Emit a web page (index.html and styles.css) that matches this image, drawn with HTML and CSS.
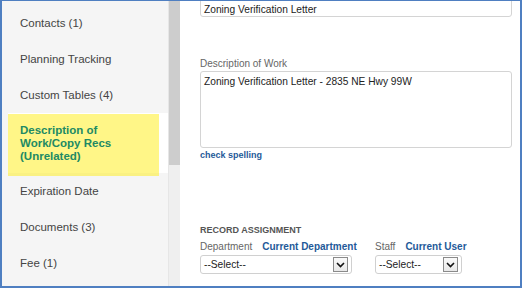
FILE: index.html
```html
<!DOCTYPE html>
<html>
<head>
<meta charset="utf-8">
<link rel="stylesheet" href="styles.css">
</head>
<body>
<div class="frame">
  <nav class="sidebar">
    <div class="item">Contacts (1)</div>
    <div class="item">Planning Tracking</div>
    <div class="item">Custom Tables (4)</div>
    <div class="item selected"><span class="hl"></span><span class="seltext">Description of<br>Work/Copy Recs<br>(Unrelated)</span></div>
    <div class="item">Expiration Date</div>
    <div class="item">Documents (3)</div>
    <div class="item">Fee (1)</div>
  </nav>
  <div class="scrollbar"><div class="thumb"></div></div>
  <main class="main">
    <div class="field input">Zoning Verification Letter</div>
    <div class="label">Description of Work</div>
    <div class="field textarea">Zoning Verification Letter - 2835 NE Hwy 99W</div>
    <div class="link spell">check spelling</div>
    <div class="section">RECORD ASSIGNMENT</div>
    <div class="assign">
      <div class="group g-dept">
        <div class="grouphead"><span class="label">Department</span><span class="link">Current Department</span></div>
        <div class="select dept"><span>--Select--</span><span class="arrow"><svg width="9" height="6" viewBox="0 0 9 6"><polyline points="1,1 4.5,4.5 8,1" fill="none" stroke="#111" stroke-width="1.6"/></svg></span></div>
      </div>
      <div class="group g-staff">
        <div class="grouphead"><span class="label">Staff</span><span class="link">Current User</span></div>
        <div class="select staff"><span>--Select--</span><span class="arrow"><svg width="9" height="6" viewBox="0 0 9 6"><polyline points="1,1 4.5,4.5 8,1" fill="none" stroke="#111" stroke-width="1.6"/></svg></span></div>
      </div>
    </div>
  </main>
</div>
</body>
</html>
```

FILE: styles.css
```css
html, body {
  margin: 0;
  padding: 0;
  background: #fff;
}
.frame {
  width: 522px;
  height: 288px;
  box-sizing: border-box;
  border: 2px solid #4f7fc1;
  border-top-width: 1px;
  display: flex;
  overflow: hidden;
  font-family: "Liberation Sans", Arial, sans-serif;
}
.sidebar {
  width: 166px;
  flex: none;
  background: #f5f5f5;
  padding-top: 4px;
  box-sizing: border-box;
}
.item {
  font-size: 11.5px;
  line-height: 14px;
  color: #444;
  padding: 11px 0 11px 18px;
}
.item.selected {
  position: relative;
  margin-left: 6px;
  padding: 11px 0 10px 12px;
  line-height: 13px;
  background: #fff;
  color: #218a64;
  font-weight: bold;
}
.seltext {
  position: relative;
}
.hl {
  position: absolute;
  left: 0;
  top: 1px;
  width: 151px;
  height: 62px;
  background: rgba(255, 236, 0, 0.47);
  filter: blur(0.6px);
}
.scrollbar {
  width: 12px;
  flex: none;
  background: #efefef;
  border-left: 1px solid #e6e6e6;
  box-sizing: border-box;
}
.thumb {
  height: 164px;
  background: #cdcdcd;
}
.main {
  flex: 1;
  padding-left: 20px;
  font-size: 10.2px;
  color: #222;
}
.field {
  width: 312px;
  box-sizing: border-box;
  border: 1px solid #d4d4d4;
  border-radius: 3px;
  background: #fff;
  padding: 0 3px;
  line-height: 12px;
}
.input {
  margin-top: -7px;
  height: 23px;
  padding-top: 9px;
}
.label {
  color: #666;
  font-size: 10px;
  line-height: 12px;
}
.main > .label {
  margin-top: 41px;
  margin-bottom: 1px;
}
.textarea {
  height: 77px;
  padding-top: 4px;
}
.link {
  color: #1f5a99;
  font-weight: bold;
  font-size: 10px;
  line-height: 12px;
}
.spell {
  font-size: 9px;
  margin-top: 1px;
}
.section {
  margin-top: 63px;
  font-size: 9px;
  font-weight: bold;
  color: #555;
  line-height: 12px;
}
.assign {
  display: flex;
  gap: 23px;
  margin-top: 5px;
}
.group {
  flex: none;
  min-width: 0;
}
.g-dept { width: 152px; }
.g-staff { width: 87px; }
.grouphead {
  display: flex;
  gap: 10px;
  line-height: 12px;
  white-space: nowrap;
}
.select {
  margin-top: 2px;
  height: 19px;
  box-sizing: border-box;
  border: 1px solid #d0d0d0;
  border-radius: 3px;
  display: flex;
  align-items: center;
  justify-content: space-between;
  padding: 0 3px 0 3px;
  font-size: 10.2px;
  color: #222;
}
.dept { width: 152px; }
.staff { width: 87px; }
.arrow {
  width: 15px;
  height: 15px;
  box-sizing: border-box;
  border: 1px solid #8a8a8a;
  background: linear-gradient(#fafafa, #e8e8e8);
  display: flex;
  align-items: center;
  justify-content: center;
}
```
